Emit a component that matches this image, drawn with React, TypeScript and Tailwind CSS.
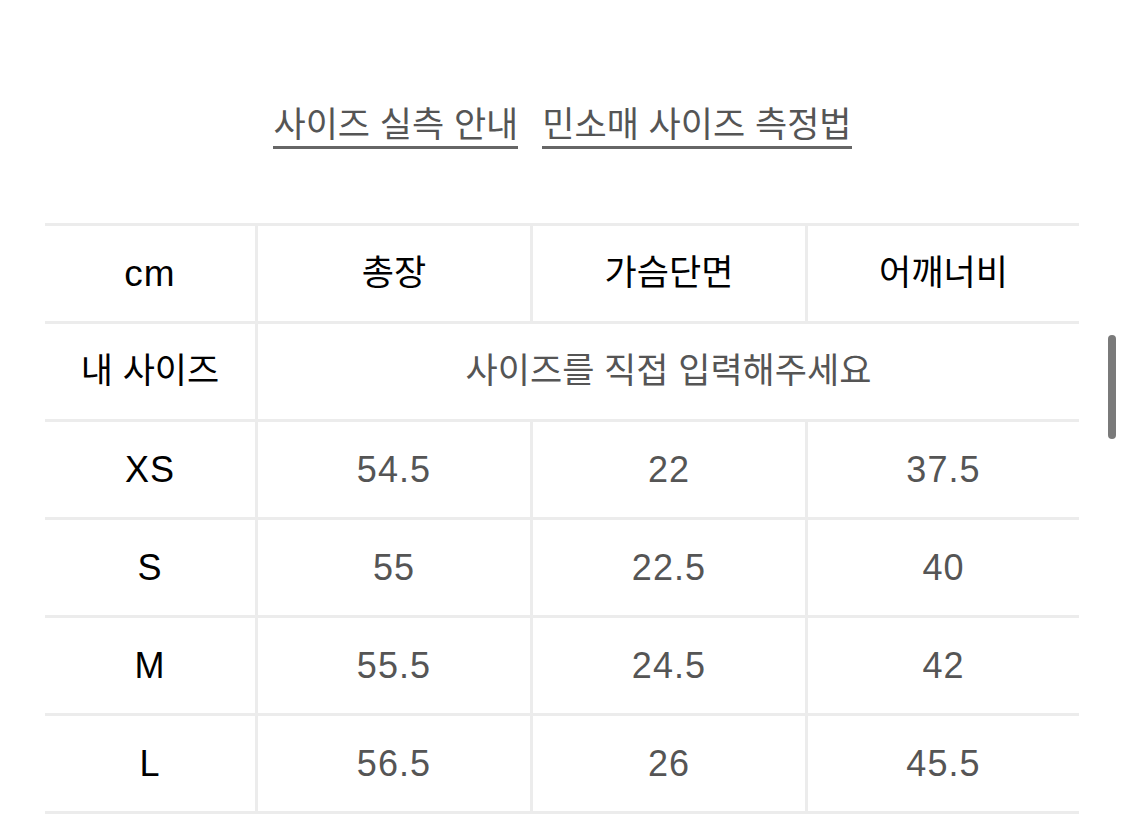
const font = { fontFamily: '"Liberation Sans", "Noto Sans CJK KR", sans-serif' };

const headers = ["총장", "가슴단면", "어깨너비"];

const rows = [
  { size: "XS", values: ["54.5", "22", "37.5"] },
  { size: "S", values: ["55", "22.5", "40"] },
  { size: "M", values: ["55.5", "24.5", "42"] },
  { size: "L", values: ["56.5", "26", "45.5"] },
];

function Cell({ children, first, className = "" }: { children: React.ReactNode; first?: boolean; className?: string }) {
  return (
    <div
      className={`flex h-[98px] items-center justify-center border-b-[3px] border-[#ececec] ${
        first ? "" : "border-l-[3px]"
      } ${className}`}
    >
      {children}
    </div>
  );
}

export default function App() {
  return (
    <div className="relative h-[837px] w-[1125px] overflow-hidden bg-white" style={font}>
      <div className="flex justify-center gap-6 pt-[103px] text-[35px] text-[#555]">
        <span className="border-b-[3px] border-[#666] leading-[43px]">사이즈 실측 안내</span>
        <span className="border-b-[3px] border-[#666] leading-[43px]">민소매 사이즈 측정법</span>
      </div>

      <div className="ml-[45px] mt-[74px] w-[1034px] border-t-[3px] border-[#ececec]">
        <div className="grid grid-cols-[210px_275px_275px_1fr] text-[35px] text-black">
          <Cell first className="text-[37px] tracking-[0.03em]">cm</Cell>
          {headers.map((h) => (
            <Cell key={h}>{h}</Cell>
          ))}
        </div>
        <div className="grid grid-cols-[210px_1fr]">
          <Cell first className="text-[35px] text-black">내 사이즈</Cell>
          <Cell className="text-[35px] text-[#555]">사이즈를 직접 입력해주세요</Cell>
        </div>
        {rows.map((r) => (
          <div key={r.size} className="grid grid-cols-[210px_275px_275px_1fr] text-[36px] tracking-[0.03em]">
            <Cell first className="text-black">{r.size}</Cell>
            {r.values.map((v, i) => (
              <Cell key={i} className="text-[#555]">{v}</Cell>
            ))}
          </div>
        ))}
      </div>

      <div className="absolute left-[1108px] top-[335px] h-[104px] w-[8px] rounded-full bg-[#7a7a7a]" />
    </div>
  );
}
